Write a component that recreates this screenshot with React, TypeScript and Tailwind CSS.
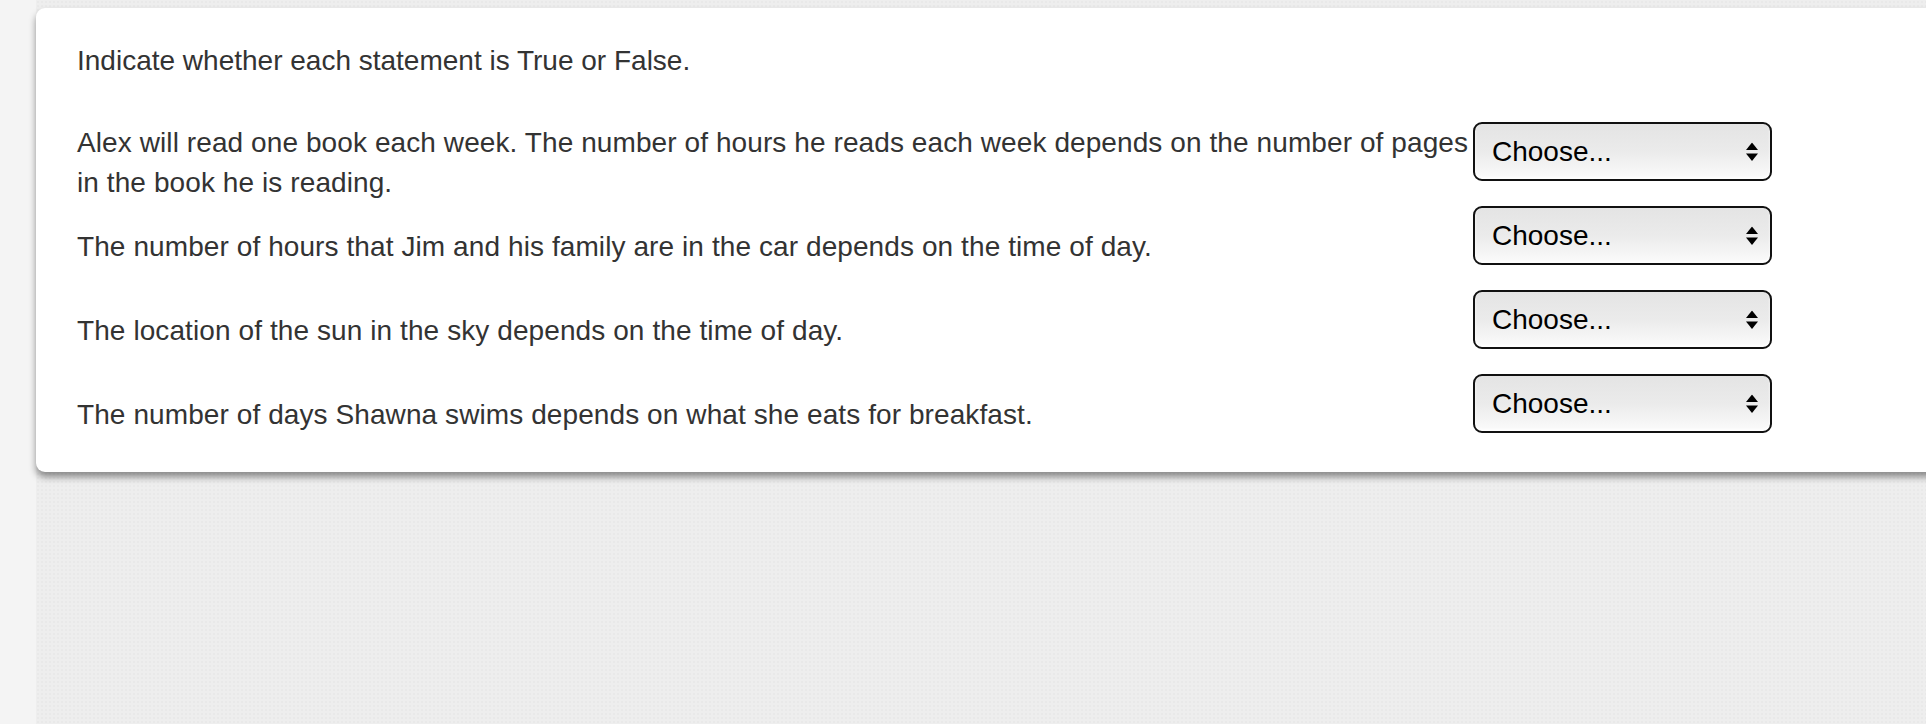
import React from "react";

const rows = [
  "Alex will read one book each week. The number of hours he reads each week depends on the number of pages in the book he is reading.",
  "The number of hours that Jim and his family are in the car depends on the time of day.",
  "The location of the sun in the sky depends on the time of day.",
  "The number of days Shawna swims depends on what she eats for breakfast.",
];

function FakeSelect() {
  return (
    <div className="relative w-[299px] h-[59px] rounded-[9px] border-2 border-[#111111] bg-[linear-gradient(to_bottom,#e4e4e4_0%,#ebebeb_50%,#fbfbfb_100%)] flex items-center pl-[17px] text-black text-[28px] shadow-[inset_0_-2px_3px_rgba(255,255,255,0.9)]">
      <span>Choose...</span>
      <svg
        className="absolute right-[12px] top-1/2 -translate-y-1/2"
        width="12"
        height="19"
        viewBox="0 0 12 19"
      >
        <polygon points="6,0 12,7.5 0,7.5" fill="#000" />
        <polygon points="0,11 12,11 6,18.5" fill="#000" />
      </svg>
    </div>
  );
}

export default function App() {
  return (
    <div
      className="w-full h-[724px] overflow-hidden bg-[#f4f4f4] flex"
      style={{ fontFamily: '"Liberation Sans", Arial, Helvetica, sans-serif' }}
    >
      <div className="w-[36px] shrink-0 bg-[#f4f4f4]" />
      <div className="flex-1 bg-[#eeeeee] bg-[radial-gradient(#e9e9e9_1px,transparent_1px)] bg-[length:4px_4px] pt-[8px]">
        <div className="w-[1950px] bg-white rounded-l-[9px] shadow-[0_5px_7px_rgba(0,0,0,0.42)] pl-[41px] pt-[33px] pb-[17px] text-[#333333] text-[28px] leading-[40px]">
          <div>Indicate whether each statement is True or False.</div>
          <div className="mt-[38px] flex flex-col">
            {rows.map((t, i) => (
              <div key={i} className="flex h-[84px]">
                <div className="w-[1396px] self-center pt-[4px] tracking-[0.09px]">{t}</div>
                <div className="pt-[3px]">
                  <FakeSelect />
                </div>
              </div>
            ))}
          </div>
        </div>
      </div>
    </div>
  );
}
